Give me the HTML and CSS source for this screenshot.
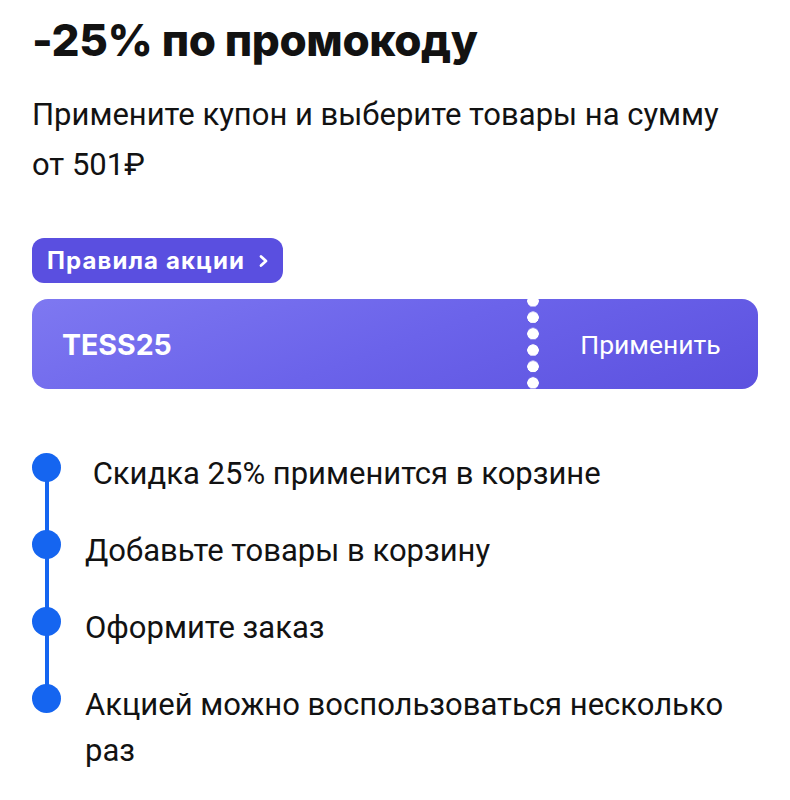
FILE: index.html
```html
<!DOCTYPE html>
<html lang="ru">
<head>
<meta charset="utf-8">
<link rel="stylesheet" href="styles.css">
</head>
<body>
<main class="page">
  <h1 class="title">-25% по промокоду</h1>
  <p class="desc">Примените купон и выберите товары на сумму от 501&#8381;</p>
  <a class="rules">Правила акции
    <svg class="chev" width="12" height="14" viewBox="0 0 12 14"><path d="M3 2.5 L8 7 L3 11.5" fill="none" stroke="#fff" stroke-width="2.8" stroke-linecap="round" stroke-linejoin="round"/></svg>
  </a>
  <div class="coupon">
    <div class="code">TESS25</div>
    <div class="perf"></div>
    <div class="apply">Применить</div>
  </div>
  <ol class="steps">
    <li class="step"><span class="dot"></span><span class="txt">&nbsp;Скидка 25% применится в корзине</span></li>
    <li class="step"><span class="dot"></span><span class="txt">Добавьте товары в корзину</span></li>
    <li class="step"><span class="dot"></span><span class="txt">Оформите заказ</span></li>
    <li class="step last"><span class="dot"></span><span class="txt">Акцией можно воспользоваться несколько раз</span></li>
  </ol>
</main>
</body>
</html>
```

FILE: styles.css
```css
* { box-sizing: border-box; }
html, body { margin: 0; background: #fff; }
body { font-family: Roboto, "Noto Sans", sans-serif; color: #121212; }
.page { width: 790px; padding: 0 32px 0 32px; }
.title {
  margin: 0;
  padding-top: 12px;
  font-family: Inter, Roboto, sans-serif;
  font-weight: 800;
  font-size: 44px;
  line-height: 56px;
  letter-spacing: -0.4px;
}
.desc {
  margin: 22px 0 0 0;
  font-size: 31px;
  line-height: 50px;
  width: 712px;
}
.rules {
  margin-top: 48px;
  display: inline-flex;
  align-items: center;
  gap: 13px;
  height: 45px;
  padding: 0 13px 0 15px;
  background: #5a4fe0;
  border-radius: 12px;
  color: #fff;
  font-family: Inter, Roboto, sans-serif;
  font-weight: 700;
  font-size: 24px;
  letter-spacing: 1.1px;
}
.coupon {
  margin-top: 16px;
  width: 726px;
  height: 90px;
  border-radius: 16px;
  background: linear-gradient(160deg, #7e78f1 0%, #6b63ea 50%, #5c51df 100%);
  display: flex;
  align-items: center;
  color: #fff;
}
.code {
  flex: 1;
  padding-left: 30px;
  font-family: Inter, Roboto, sans-serif;
  font-weight: 700;
  font-size: 28.5px;
}
.perf {
  width: 12px;
  height: 90px;
  background: radial-gradient(circle at 6px 8px, #fff 5.5px, transparent 6px) 0 -6px / 12px 16.4px repeat-y;
}
.apply {
  width: 219px;
  text-align: center;
  padding-left: 4px;
  font-size: 26.5px;
}
.steps {
  list-style: none;
  margin: 64px 0 0 0;
  padding: 0;
}
.step {
  position: relative;
  display: flex;
  align-items: flex-start;
  padding-bottom: 33px;
}
.step::before {
  content: "";
  position: absolute;
  left: 12.5px;
  top: 10px;
  width: 4px;
  height: 100%;
  background: #1565f0;
}
.step.last::before { display: none; }
.dot {
  flex: none;
  width: 29px;
  height: 29px;
  border-radius: 50%;
  background: #1565f0;
  position: relative;
  z-index: 1;
}
.txt {
  margin-left: 24px;
  font-size: 31px;
  line-height: 46px;
  margin-top: -2px;
  max-width: 650px;
}
```
